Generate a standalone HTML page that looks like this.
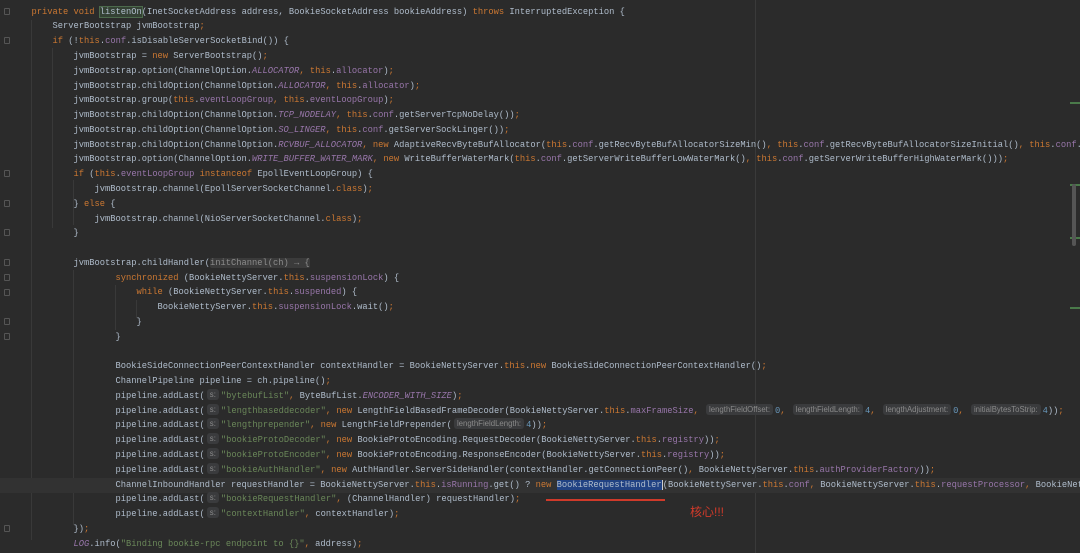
<!DOCTYPE html>
<html><head><meta charset="utf-8"><style>
body{margin:0;width:1080px;height:553px;background:#2b2b2b;overflow:hidden;position:relative;font-family:"Liberation Mono",monospace;font-size:8.75px;color:#afbccb}
.l{position:absolute;left:0;height:14.78px;line-height:14.78px;white-space:pre;width:1080px}
.k{color:#cc7832}.f{color:#9876aa}.i{color:#9876aa;font-style:italic}.s{color:#6a8759}.n{color:#6897bb}
.h{display:inline-block;font-family:"Liberation Sans",sans-serif;font-size:7.8px;color:#8a8a8a;background:#3a3b3d;border-radius:3px;padding:0 3px;line-height:11px;margin:0 2px;vertical-align:1px}
.lam{background:#3b3b3b;color:#8c8c8c;border-radius:2px}
.g{position:absolute;width:1px;background:#393939}
.fold{position:absolute;left:4px;width:6px;height:7px;border:1px solid #555;border-radius:1px;box-sizing:border-box}
.mk{position:absolute;left:1070px;width:10px;height:2px;background:#4a7a4a}
</style></head><body>
<div class="g" style="left:31px;top:20px;height:520px"></div>
<div class="g" style="left:52px;top:48px;height:180px"></div>
<div class="g" style="left:73px;top:180px;height:45px"></div>
<div class="g" style="left:73px;top:270px;height:255px"></div>
<div class="g" style="left:115px;top:285px;height:45px"></div>
<div class="g" style="left:136px;top:300px;height:18px"></div>
<div class="g" style="left:755px;top:0;height:553px;background:#3a3a3a"></div>
<div style="position:absolute;left:0;top:478px;width:1080px;height:14.78px;background:#323232"></div>
<div class="fold" style="top:8px"></div><div class="fold" style="top:37px"></div>
<div class="fold" style="top:170px"></div><div class="fold" style="top:200px"></div><div class="fold" style="top:229px"></div>
<div class="fold" style="top:259px"></div><div class="fold" style="top:274px"></div><div class="fold" style="top:289px"></div>
<div class="fold" style="top:318px"></div><div class="fold" style="top:333px"></div><div class="fold" style="top:525px"></div>
<div class="mk" style="top:102px"></div><div class="mk" style="top:184px"></div><div class="mk" style="top:237px"></div><div class="mk" style="top:307px"></div>
<div style="position:absolute;left:1072px;top:184px;width:4px;height:62px;background:#555;border-radius:2px"></div>

<div class="l" style="top:4.6px">      <span class="k">private void </span><span style="background:#344134;outline:1px solid #4c6a4c">listenOn</span>(InetSocketAddress address, BookieSocketAddress bookieAddress) <span class="k">throws </span>InterruptedException {</div>
<div class="l" style="top:19.4px">          ServerBootstrap jvmBootstrap<span class="k">;</span></div>
<div class="l" style="top:34.2px">          <span class="k">if </span>(!<span class="k">this</span>.<span class="f">conf</span>.isDisableServerSocketBind()) {</div>
<div class="l" style="top:48.9px">              jvmBootstrap = <span class="k">new </span>ServerBootstrap()<span class="k">;</span></div>
<div class="l" style="top:63.7px">              jvmBootstrap.option(ChannelOption.<span class="i">ALLOCATOR</span><span class="k">, this</span>.<span class="f">allocator</span>)<span class="k">;</span></div>
<div class="l" style="top:78.5px">              jvmBootstrap.childOption(ChannelOption.<span class="i">ALLOCATOR</span><span class="k">, this</span>.<span class="f">allocator</span>)<span class="k">;</span></div>
<div class="l" style="top:93.3px">              jvmBootstrap.group(<span class="k">this</span>.<span class="f">eventLoopGroup</span><span class="k">, this</span>.<span class="f">eventLoopGroup</span>)<span class="k">;</span></div>
<div class="l" style="top:108.1px">              jvmBootstrap.childOption(ChannelOption.<span class="i">TCP_NODELAY</span><span class="k">, this</span>.<span class="f">conf</span>.getServerTcpNoDelay())<span class="k">;</span></div>
<div class="l" style="top:122.8px">              jvmBootstrap.childOption(ChannelOption.<span class="i">SO_LINGER</span><span class="k">, this</span>.<span class="f">conf</span>.getServerSockLinger())<span class="k">;</span></div>
<div class="l" style="top:137.6px">              jvmBootstrap.childOption(ChannelOption.<span class="i">RCVBUF_ALLOCATOR</span><span class="k">, new </span>AdaptiveRecvByteBufAllocator(<span class="k">this</span>.<span class="f">conf</span>.getRecvByteBufAllocatorSizeMin()<span class="k">, this</span>.<span class="f">conf</span>.getRecvByteBufAllocatorSizeInitial()<span class="k">, this</span>.<span class="f">conf</span>.getRecv</div>
<div class="l" style="top:152.4px">              jvmBootstrap.option(ChannelOption.<span class="i">WRITE_BUFFER_WATER_MARK</span><span class="k">, new </span>WriteBufferWaterMark(<span class="k">this</span>.<span class="f">conf</span>.getServerWriteBufferLowWaterMark()<span class="k">, this</span>.<span class="f">conf</span>.getServerWriteBufferHighWaterMark()))<span class="k">;</span></div>
<div class="l" style="top:167.2px">              <span class="k">if </span>(<span class="k">this</span>.<span class="f">eventLoopGroup </span><span class="k">instanceof </span>EpollEventLoopGroup) {</div>
<div class="l" style="top:182px">                  jvmBootstrap.channel(EpollServerSocketChannel.<span class="k">class</span>)<span class="k">;</span></div>
<div class="l" style="top:196.7px">              } <span class="k">else </span>{</div>
<div class="l" style="top:211.5px">                  jvmBootstrap.channel(NioServerSocketChannel.<span class="k">class</span>)<span class="k">;</span></div>
<div class="l" style="top:226.3px">              }</div>
<div class="l" style="top:255.9px">              jvmBootstrap.childHandler(<span class="lam">initChannel(ch) → {</span></div>
<div class="l" style="top:270.6px">                      <span class="k">synchronized </span>(BookieNettyServer.<span class="k">this</span>.<span class="f">suspensionLock</span>) {</div>
<div class="l" style="top:285.4px">                          <span class="k">while </span>(BookieNettyServer.<span class="k">this</span>.<span class="f">suspended</span>) {</div>
<div class="l" style="top:300.2px">                              BookieNettyServer.<span class="k">this</span>.<span class="f">suspensionLock</span>.wait()<span class="k">;</span></div>
<div class="l" style="top:315px">                          }</div>
<div class="l" style="top:329.8px">                      }</div>
<div class="l" style="top:359.3px">                      BookieSideConnectionPeerContextHandler contextHandler = BookieNettyServer.<span class="k">this</span>.<span class="k">new </span>BookieSideConnectionPeerContextHandler()<span class="k">;</span></div>
<div class="l" style="top:374.1px">                      ChannelPipeline pipeline = ch.pipeline()<span class="k">;</span></div>
<div class="l" style="top:388.9px">                      pipeline.addLast(<span class="h">s:</span><span class="s">"bytebufList"</span><span class="k">, </span>ByteBufList.<span class="i">ENCODER_WITH_SIZE</span>)<span class="k">;</span></div>
<div class="l" style="top:403.7px">                      pipeline.addLast(<span class="h">s:</span><span class="s">"lengthbaseddecoder"</span><span class="k">, new </span>LengthFieldBasedFrameDecoder(BookieNettyServer.<span class="k">this</span>.<span class="f">maxFrameSize</span><span class="k">, </span><span class="h">lengthFieldOffset:</span><span class="n">0</span><span class="k">, </span><span class="h">lengthFieldLength:</span><span class="n">4</span><span class="k">, </span><span class="h">lengthAdjustment:</span><span class="n">0</span><span class="k">, </span><span class="h">initialBytesToStrip:</span><span class="n">4</span>))<span class="k">;</span></div>
<div class="l" style="top:418.4px">                      pipeline.addLast(<span class="h">s:</span><span class="s">"lengthprepender"</span><span class="k">, new </span>LengthFieldPrepender(<span class="h">lengthFieldLength:</span><span class="n">4</span>))<span class="k">;</span></div>
<div class="l" style="top:433.2px">                      pipeline.addLast(<span class="h">s:</span><span class="s">"bookieProtoDecoder"</span><span class="k">, new </span>BookieProtoEncoding.RequestDecoder(BookieNettyServer.<span class="k">this</span>.<span class="f">registry</span>))<span class="k">;</span></div>
<div class="l" style="top:448px">                      pipeline.addLast(<span class="h">s:</span><span class="s">"bookieProtoEncoder"</span><span class="k">, new </span>BookieProtoEncoding.ResponseEncoder(BookieNettyServer.<span class="k">this</span>.<span class="f">registry</span>))<span class="k">;</span></div>
<div class="l" style="top:462.8px">                      pipeline.addLast(<span class="h">s:</span><span class="s">"bookieAuthHandler"</span><span class="k">, new </span>AuthHandler.ServerSideHandler(contextHandler.getConnectionPeer()<span class="k">, </span>BookieNettyServer.<span class="k">this</span>.<span class="f">authProviderFactory</span>))<span class="k">;</span></div>
<div class="l" style="top:477.6px">                      ChannelInboundHandler requestHandler = BookieNettyServer.<span class="k">this</span>.<span class="f">isRunning</span>.get() ? <span class="k">new </span><span style="background:#214283">BookieRequestHandler</span><span style="border-left:1px solid #ccc">(</span>BookieNettyServer.<span class="k">this</span>.<span class="f">conf</span><span class="k">, </span>BookieNettyServer.<span class="k">this</span>.<span class="f">requestProcessor</span><span class="k">, </span>BookieNettyServer</div>
<div class="l" style="top:492.3px">                      pipeline.addLast(<span class="h">s:</span><span class="s">"bookieRequestHandler"</span><span class="k">, </span>(ChannelHandler) requestHandler)<span class="k">;</span></div>
<div class="l" style="top:507.1px">                      pipeline.addLast(<span class="h">s:</span><span class="s">"contextHandler"</span><span class="k">, </span>contextHandler)<span class="k">;</span></div>
<div class="l" style="top:521.9px">              })<span class="k">;</span></div>
<div class="l" style="top:536.7px">              <span class="i">LOG</span>.info(<span class="s">"Binding bookie-rpc endpoint to {}"</span><span class="k">, </span>address)<span class="k">;</span></div>

<div style="position:absolute;left:546px;top:499px;width:119px;height:2px;background:#d03a2a"></div>
<div style="position:absolute;left:690px;top:504px;font-family:'Liberation Sans','Noto Sans CJK SC',sans-serif;font-size:12px;color:#d03a2a;line-height:16px">核心!!!</div>
</body></html>
